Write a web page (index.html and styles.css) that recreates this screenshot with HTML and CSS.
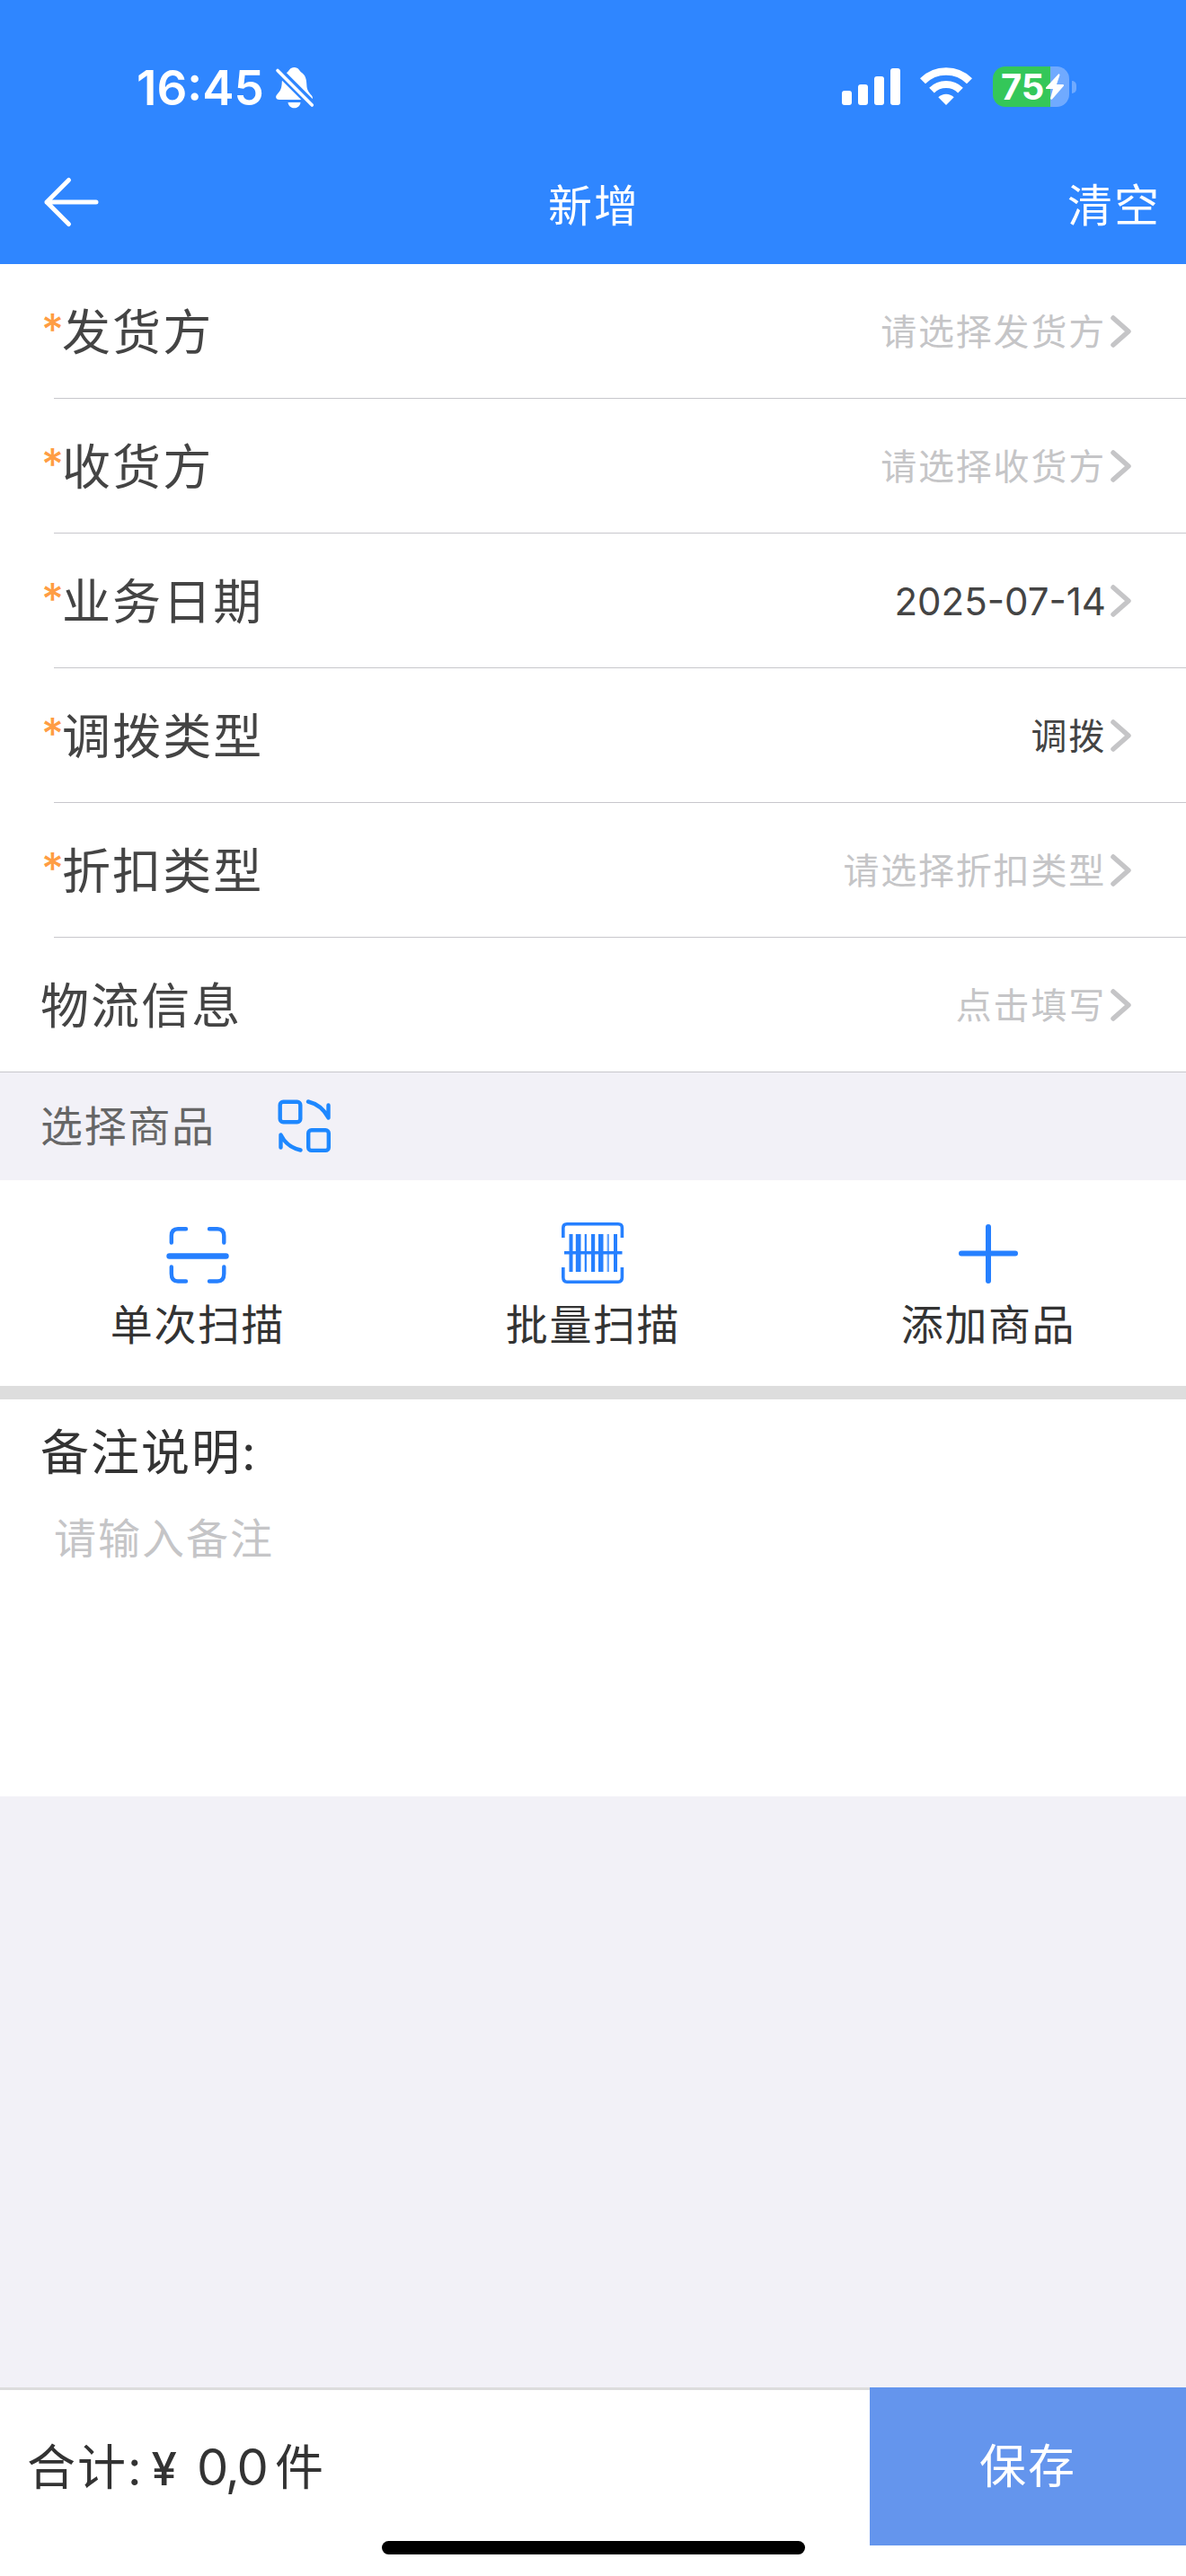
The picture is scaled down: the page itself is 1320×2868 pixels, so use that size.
FILE: index.html
```
<!DOCTYPE html>
<html lang="zh-CN">
<head>
  <meta charset="UTF-8">
  <meta name="viewport" content="width=device-width, initial-scale=1">
  <title>新增</title>
  <link rel="stylesheet" href="styles.css">
</head>
<body>

  <header class="header">
    <div class="status-bar">
      <div class="status-left">
        <span class="time">16:45</span>
        <svg class="bell" width="44" height="48" viewBox="0 0 44 48">
          <path fill="#fff" d="M13 7C16 5 16.500 1 21.500 1S27 5 30 7C34 10 35 14 35.300 20C35.500 27 38 29 41 32.500C42.500 34.500 42 36 41 37H5C1 37 0 33.500 2.500 31C6 27 7.500 25 7.800 17C8 12 10 9 13 7Z"/>
          <path fill="#fff" d="M14.500 40H28.500C28 44 25 46.300 21.500 46.300S15 44 14.500 40Z"/>
          <path stroke="#2f86ff" stroke-width="9.500" d="M-1 0L46 47"/>
          <path stroke="#fff" stroke-width="3.600" stroke-linecap="round" d="M3 4.500L41.300 43"/>
        </svg>
      </div>
      <div class="status-right">
        <svg width="66" height="48" viewBox="0 0 66 48" fill="#fff">
          <rect x="0" y="27" width="11" height="16" rx="3"/>
          <rect x="18" y="20" width="11" height="23" rx="3"/>
          <rect x="36" y="11" width="11" height="32" rx="3"/>
          <rect x="54" y="2" width="11" height="41" rx="3"/>
        </svg>
        <svg class="wifi" width="58" height="48" viewBox="0 0 58 48" fill="none" stroke="#fff">
          <path stroke-width="8.500" d="M3 16.300A37 37 0 0 1 55 16.300"/>
          <path stroke-width="8" d="M13 26.700A22.700 22.700 0 0 1 45 26.700"/>
          <path fill="#fff" stroke="none" d="M20.300 34.200A12.500 12.500 0 0 1 37.700 34.200L29 43Z"/>
        </svg>
        <div class="battery">
          <span class="level">75</span>
          <svg class="bolt" width="22" height="31" viewBox="0 0 22 31" fill="#fff">
            <path d="M15 1.500L1 16.500Q0.500 18 2 18H9L6 28.500Q6.500 30.500 8 29.500L21 14.500Q21.500 13 20 13H13L16.500 2.500Q16 0.500 15 1.500Z"/>
          </svg>
        </div>
        <span class="battery-cap"></span>
      </div>
    </div>
    <nav class="nav-bar">
      <svg class="back" width="64" height="58" viewBox="0 0 64 58" fill="none" stroke="#fff" stroke-width="5" stroke-linecap="round" stroke-linejoin="round">
        <path d="M29.500 4.500L5 29L29.500 53.500M5 29H60"/>
      </svg>
      <h1 class="title">新增</h1>
      <span class="clear">清空</span>
    </nav>
  </header>

  <main>
    <div class="form-list">
      <div class="row">
        <span class="label"><i class="required">*</i>发货方</span>
        <span class="value placeholder">请选择发货方</span>
        <svg class="arrow" width="27" height="42" viewBox="0 0 27 42"><path d="M5 6L22 21L5 36"/></svg>
      </div>
      <div class="row">
        <span class="label"><i class="required">*</i>收货方</span>
        <span class="value placeholder">请选择收货方</span>
        <svg class="arrow" width="27" height="42" viewBox="0 0 27 42"><path d="M5 6L22 21L5 36"/></svg>
      </div>
      <div class="row">
        <span class="label"><i class="required">*</i>业务日期</span>
        <span class="value date">2025-07-14</span>
        <svg class="arrow" width="27" height="42" viewBox="0 0 27 42"><path d="M5 6L22 21L5 36"/></svg>
      </div>
      <div class="row">
        <span class="label"><i class="required">*</i>调拨类型</span>
        <span class="value">调拨</span>
        <svg class="arrow" width="27" height="42" viewBox="0 0 27 42"><path d="M5 6L22 21L5 36"/></svg>
      </div>
      <div class="row">
        <span class="label"><i class="required">*</i>折扣类型</span>
        <span class="value placeholder">请选择折扣类型</span>
        <svg class="arrow" width="27" height="42" viewBox="0 0 27 42"><path d="M5 6L22 21L5 36"/></svg>
      </div>
      <div class="row">
        <span class="label">物流信息</span>
        <span class="value placeholder">点击填写</span>
        <svg class="arrow" width="27" height="42" viewBox="0 0 27 42"><path d="M5 6L22 21L5 36"/></svg>
      </div>
    </div>

    <div class="section-title">
      <span>选择商品</span>
      <svg width="60" height="60" viewBox="0 0 60 60" fill="none" stroke="#1e88ff" stroke-width="4.400" stroke-linecap="round" stroke-linejoin="round">
        <rect x="2.700" y="2.700" width="22.600" height="22.600" rx="3.500"/>
        <rect x="34.200" y="34.300" width="22.600" height="22.600" rx="3.500"/>
        <path d="M34 2.500Q49 6 56.500 20.500V6.500"/>
        <path d="M25.500 56.500Q10 53 3.500 39.500V53.500"/>
      </svg>
    </div>

    <div class="actions">
      <div class="action">
        <svg width="70" height="70" viewBox="0 0 70 70" fill="none" stroke="#2680ff" stroke-width="4.400" stroke-linecap="round">
          <path d="M5.800 23.500V16Q5.800 8.200 13 8.200H22"/>
          <path d="M48 8.200H57Q64.300 8.200 64.300 16V23.500"/>
          <path d="M5.800 50.500V58Q5.800 66.500 13 66.500H22"/>
          <path d="M48 66.500H57Q64.300 66.500 64.300 58V50.500"/>
          <path stroke-width="6.400" d="M3.500 38.500H66.500"/>
        </svg>
        <span>单次扫描</span>
      </div>
      <div class="action">
        <svg width="70" height="70" viewBox="0 0 70 70" fill="#2680ff">
          <path fill="none" stroke="#2680ff" stroke-width="3.600" d="M1.800 18V7Q1.800 2.800 6 2.800H63Q67.400 2.800 67.400 7V18M1.800 51V62Q1.800 67.200 6 67.200H63Q67.400 67.200 67.400 62V51"/>
          <rect x="8.500" y="14" width="4" height="42"/>
          <rect x="15.800" y="14" width="5.700" height="42"/>
          <rect x="25.700" y="14" width="2.200" height="42"/>
          <rect x="33" y="14" width="4.200" height="42"/>
          <rect x="41" y="14" width="5.500" height="42"/>
          <rect x="50.600" y="14" width="2.400" height="42" opacity=".7"/>
          <rect x="58" y="14" width="4" height="42"/>
          <rect x="3" y="33" width="64.500" height="3.500"/>
        </svg>
        <span>批量扫描</span>
      </div>
      <div class="action">
        <svg width="70" height="70" viewBox="0 0 70 70" fill="none" stroke="#2680ff" stroke-width="6" stroke-linecap="round">
          <path d="M35 6V66M5 35.500H65"/>
        </svg>
        <span>添加商品</span>
      </div>
    </div>

    <div class="remark">
      <label for="remark">备注说明:</label>
      <textarea id="remark" placeholder="请输入备注"></textarea>
    </div>
  </main>

  <footer class="footer">
    <div class="total">合计:<span class="yen">¥</span><span class="num">0,0</span>件</div>
    <button class="save">保存</button>
    <div class="home-indicator"></div>
  </footer>

</body>
</html>
```
FILE: styles.css
```
* {
  box-sizing: border-box;
}

body {
  margin: 0;
  height: 2868px;
  display: flex;
  flex-direction: column;
  font-family: Inter, "Noto Sans CJK SC", sans-serif;
  background-color: #f2f1f7;
  color: #333;
}

svg {
  display: block;
  flex: none;
}

/* Header */
.header {
  height: 294px;
  background-color: #2f86ff;
  color: #fff;
}

.status-bar {
  height: 162px;
  padding: 74px 122px 0 152px;
  display: flex;
  justify-content: space-between;
}

.status-left,
.status-right {
  display: flex;
  align-items: flex-start;
}

.time {
  width: 154px;
  font-size: 53px;
  font-weight: 600;
  line-height: 48px;
}

.wifi {
  margin-left: 21px;
}

.battery {
  width: 85px;
  height: 45px;
  margin-left: 23px;
  padding-left: 9px;
  display: flex;
  align-items: center;
  border-radius: 14px;
  background: linear-gradient(to right, #34c759 64px, #70aaff 64px);
}

.level {
  width: 49px;
  font-size: 40px;
  font-weight: 700;
  line-height: 45px;
}

.battery-cap {
  width: 5px;
  height: 14px;
  margin: 16px 0 0 3px;
  border-radius: 0 5px 5px 0;
  background-color: #70aaff;
}

.nav-bar {
  height: 132px;
  padding: 0 28px 0 47px;
  display: grid;
  grid-template-columns: 1fr auto 1fr;
  align-items: center;
  letter-spacing: 2px;
  line-height: 60px;
}

.back {
  margin-bottom: 6px;
}

.title {
  margin: 4px 0 0 -17px;
  font-size: 49px;
  font-weight: 400;
}

.clear {
  margin-top: 1px;
  justify-self: end;
  font-size: 50px;
}

/* Form rows */
.form-list {
  background-color: #fff;
  border-bottom: 1px solid #c8c7cc;
}

.row {
  height: 150px;
  margin-left: 60px;
  padding-right: 59px;
  display: flex;
  align-items: center;
  border-bottom: 1px solid #c8c7cc;
}

.row:last-child {
  height: 149px;
  border-bottom: none;
}

.label {
  flex: 1;
  display: flex;
  margin-left: -15px;
  padding-top: 5px;
  font-size: 54px;
  line-height: 80px;
  letter-spacing: 2.1px;
  color: #444;
}

.required {
  width: 24px;
  padding-left: 1px;
  font-size: 48px;
  font-style: normal;
  font-weight: 500;
  line-height: 72px;
  color: #ff9d43;
}

.value {
  margin-right: 3px;
  padding-top: 2px;
  font-size: 40px;
  line-height: 60px;
  letter-spacing: 1.8px;
  color: #444;
}

.date {
  font-size: 42px;
  letter-spacing: 0;
}

.placeholder {
  color: #c5c5c7;
}

.arrow path {
  fill: none;
  stroke: #c5c5c7;
  stroke-width: 5.5;
  stroke-linecap: round;
  stroke-linejoin: round;
}

/* Goods */
.section-title {
  height: 120px;
  padding-left: 45px;
  display: flex;
  align-items: center;
  gap: 69px;
  font-size: 47px;
  line-height: 60px;
  letter-spacing: 1.7px;
  color: #666;
}

.actions {
  height: 244px;
  display: flex;
  background-color: #fff;
  border-bottom: 15px solid #ddd;
}

.action {
  flex: 1;
  padding-top: 46px;
  display: flex;
  flex-direction: column;
  align-items: center;
  gap: 15px;
  font-size: 47px;
  line-height: 60px;
  letter-spacing: 1.6px;
}

/* Remark */
.remark {
  height: 442px;
  padding: 20px 0 0 45px;
  display: flex;
  flex-direction: column;
  background-color: #fff;
}

.remark label {
  font-size: 54px;
  line-height: 80px;
  letter-spacing: 2px;
}

.remark textarea {
  flex: 1;
  padding: 25px 15px;
  border: none;
  outline: none;
  resize: none;
  background: none;
  font-family: inherit;
  font-size: 47px;
  line-height: 60px;
  letter-spacing: 2px;
}

.remark textarea::placeholder {
  color: #c5c5c7;
}

/* Footer */
.footer {
  position: relative;
  height: 210px;
  margin-top: auto;
  display: flex;
  background-color: #fff;
}

.total {
  flex: 1;
  padding-left: 30px;
  border-top: 3px solid #ddd;
  font-size: 54px;
  line-height: 172px;
  letter-spacing: 2px;
}

.yen {
  margin: 0 20px 0 9px;
  font-size: 51px;
  font-weight: 500;
}

.num {
  margin-right: 9px;
  font-size: 56px;
  letter-spacing: -2px;
}

.save {
  width: 352px;
  height: 176px;
  padding: 1px 0 0;
  border: none;
  background-color: #6495ed;
  color: #fff;
  font-family: inherit;
  font-size: 52px;
  line-height: 80px;
  letter-spacing: 2px;
}

.home-indicator {
  position: absolute;
  left: 425px;
  bottom: 24px;
  width: 471px;
  height: 15px;
  border-radius: 8px;
  background-color: #000;
}
```
